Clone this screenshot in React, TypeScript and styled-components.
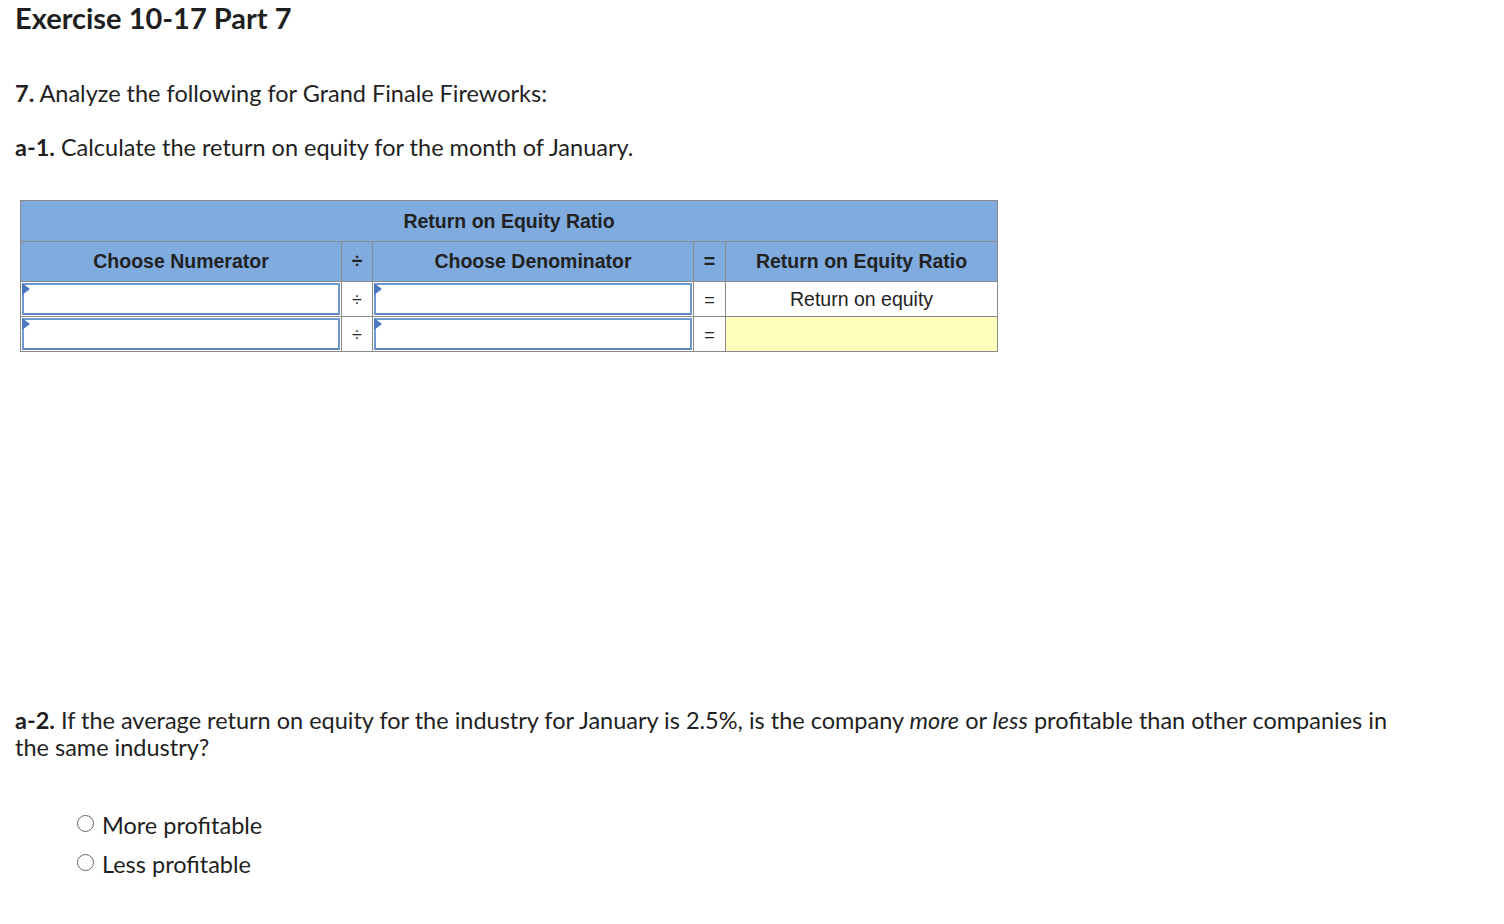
import styled, { createGlobalStyle } from "styled-components";

const GlobalStyle = createGlobalStyle`
  html, body {
    margin: 0;
    padding: 0;
    background: #fff;
  }
  body {
    font-family: Lato, "Open Sans", sans-serif;
    color: #1f1f1f;
  }
`;

const Page = styled.div`
  padding: 0 15px;
  width: 1410px;
`;

const Title = styled.h1`
  margin: 0;
  padding-top: 2px;
  font-size: 29px;
  line-height: 32px;
  font-weight: 700;
`;

const Para = styled.p<{ $top?: number }>`
  margin: ${(p) => p.$top ?? 0}px 0 0;
  font-size: 23.5px;
  line-height: 27px;
`;

const Table = styled.table`
  margin: 39px 0 0 5px;
  border-collapse: collapse;
  font-family: "Liberation Sans", Arial, sans-serif;
  border: 1px solid #8a8a8a;
  table-layout: fixed;
  width: 977px;
`;

const HeadCell = styled.th<{ $h: number }>`
  background: #7fabdf;
  border: 1px solid #8a8a8a;
  font-size: 19.5px;
  font-weight: 700;
  color: #222;
  height: ${(p) => p.$h}px;
  padding: 0;
  text-align: center;
`;

const Cell = styled.td<{ $fill?: string }>`
  border: 1px solid #8a8a8a;
  height: 32px;
  padding: 0;
  text-align: center;
  font-size: 19.5px;
  color: #222;
  background: ${(p) => p.$fill ?? "#fff"};
`;

const InputCell = styled.td`
  border: 1px solid #8a8a8a;
  padding: 1px;
  height: 32px;
`;

const Select = styled.div`
  position: relative;
  height: 32px;
  box-sizing: border-box;
  border: 2px solid #6f9ad2;
  border-bottom-color: #5c86c0;
  background: #fff;

  &::before {
    content: "";
    position: absolute;
    left: -2px;
    top: -2px;
    border-top: 6px solid transparent;
    border-bottom: 6px solid transparent;
    border-left: 8px solid #4a78bd;
  }
`;

const Op = styled.span`
  font-size: 18px;
`;

const Options = styled.div`
  margin: 51px 0 0 62px;
  display: flex;
  flex-direction: column;
  gap: 13px;
`;

const Option = styled.label`
  display: flex;
  align-items: center;
  gap: 8px;
  font-size: 23.5px;
  line-height: 26px;
`;

const Radio = styled.span`
  width: 17px;
  height: 17px;
  box-sizing: border-box;
  border: 1px solid #666;
  border-radius: 50%;
  margin-top: -4px;
`;

const cols = [321, 31, 321, 32, 272];

const rows = [
  { result: "Return on equity", fill: "#fff" },
  { result: "", fill: "#ffffbb" },
];

export default function App() {
  return (
    <>
      <GlobalStyle />
      <Page>
        <Title>Exercise 10-17 Part 7</Title>
        <Para $top={46}>
          <b>7.</b> Analyze the following for Grand Finale Fireworks:
        </Para>
        <Para $top={27}>
          <b>a-1.</b> Calculate the return on equity for the month of January.
        </Para>
        <Table>
          <colgroup>
            {cols.map((w, i) => (
              <col key={i} style={{ width: w }} />
            ))}
          </colgroup>
          <thead>
            <tr>
              <HeadCell $h={40} colSpan={5}>
                Return on Equity Ratio
              </HeadCell>
            </tr>
            <tr>
              <HeadCell $h={39}>Choose Numerator</HeadCell>
              <HeadCell $h={39}>÷</HeadCell>
              <HeadCell $h={39}>Choose Denominator</HeadCell>
              <HeadCell $h={39}>=</HeadCell>
              <HeadCell $h={39}>Return on Equity Ratio</HeadCell>
            </tr>
          </thead>
          <tbody>
            {rows.map((r, i) => (
              <tr key={i}>
                <InputCell>
                  <Select />
                </InputCell>
                <Cell>
                  <Op>÷</Op>
                </Cell>
                <InputCell>
                  <Select />
                </InputCell>
                <Cell>
                  <Op>=</Op>
                </Cell>
                <Cell $fill={r.fill}>{r.result}</Cell>
              </tr>
            ))}
          </tbody>
        </Table>
        <Para $top={355}>
          <b>a-2.</b> If the average return on equity for the industry for
          January is 2.5%, is the company <i>more</i> or <i>less</i> profitable
          than other companies in the same industry?
        </Para>
        <Options>
          <Option>
            <Radio />
            More profitable
          </Option>
          <Option>
            <Radio />
            Less profitable
          </Option>
        </Options>
      </Page>
    </>
  );
}
